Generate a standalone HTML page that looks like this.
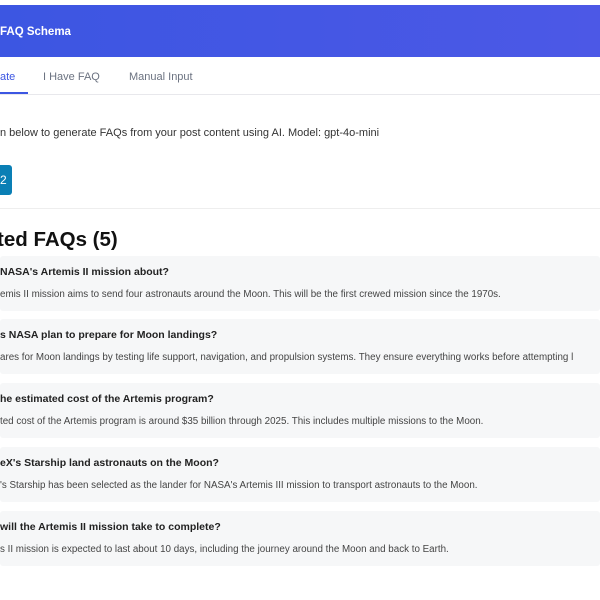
<!DOCTYPE html>
<html><head><style>
body{margin:0;width:600px;height:600px;overflow:hidden;background:#fff;font-family:"Liberation Sans",sans-serif;position:relative}
.hd{position:absolute;top:5px;left:0;width:600px;height:52px;background:linear-gradient(90deg,#3c56e2,#4c58e6);color:#fff;font-weight:bold;font-size:11.5px;line-height:55px}
.tabs{position:absolute;top:57px;left:0;width:600px;height:37px;border-bottom:1px solid #e8e8ec;font-size:11px;color:#6b7280}
.tabs span{position:absolute;top:14px}
.ul{position:absolute;left:0;top:35px;width:28px;height:2px;background:#3c56e2}
.t{position:absolute;font-size:11px;color:#333}
.btn{position:absolute;left:0;top:165px;width:12px;height:30px;background:#0a7fb5;border-radius:0 3px 3px 0;color:#fff;font-size:12px;line-height:30px}
.div{position:absolute;top:208px;left:0;width:600px;height:1px;background:#eee}
h2{position:absolute;margin:0;top:228px;left:-3px;font-size:20.5px;color:#111}
.c{position:absolute;left:0;width:600px;height:55px;background:#f6f7f8;border-radius:3px}
.q{position:absolute;left:0;top:10px;font-size:10.5px;font-weight:bold;color:#222;white-space:nowrap}
.a{position:absolute;left:0;top:33px;font-size:9.8px;color:#444;white-space:nowrap}
</style></head><body>
<div class="hd">FAQ Schema</div>
<div class="tabs"><span style="left:0;color:#3c56e2;top:14px">ate</span><div class="ul"></div><span style="left:43px">I Have FAQ</span><span style="left:129px">Manual Input</span></div>
<div class="t" style="top:127px;left:0">n below to generate FAQs from your post content using AI. Model: gpt-4o-mini</div>
<div class="btn">2</div>
<div class="div"></div>
<h2>ted FAQs (5)</h2>
<div class="c" style="top:256px"><div class="q">NASA's Artemis II mission about?</div><div class="a">emis II mission aims to send four astronauts around the Moon. This will be the first crewed mission since the 1970s.</div></div>
<div class="c" style="top:319px"><div class="q">s NASA plan to prepare for Moon landings?</div><div class="a">ares for Moon landings by testing life support, navigation, and propulsion systems. They ensure everything works before attempting l</div></div>
<div class="c" style="top:383px"><div class="q">he estimated cost of the Artemis program?</div><div class="a">ted cost of the Artemis program is around $35 billion through 2025. This includes multiple missions to the Moon.</div></div>
<div class="c" style="top:447px"><div class="q">eX's Starship land astronauts on the Moon?</div><div class="a">'s Starship has been selected as the lander for NASA's Artemis III mission to transport astronauts to the Moon.</div></div>
<div class="c" style="top:511px"><div class="q">will the Artemis II mission take to complete?</div><div class="a">s II mission is expected to last about 10 days, including the journey around the Moon and back to Earth.</div></div>
</body></html>
